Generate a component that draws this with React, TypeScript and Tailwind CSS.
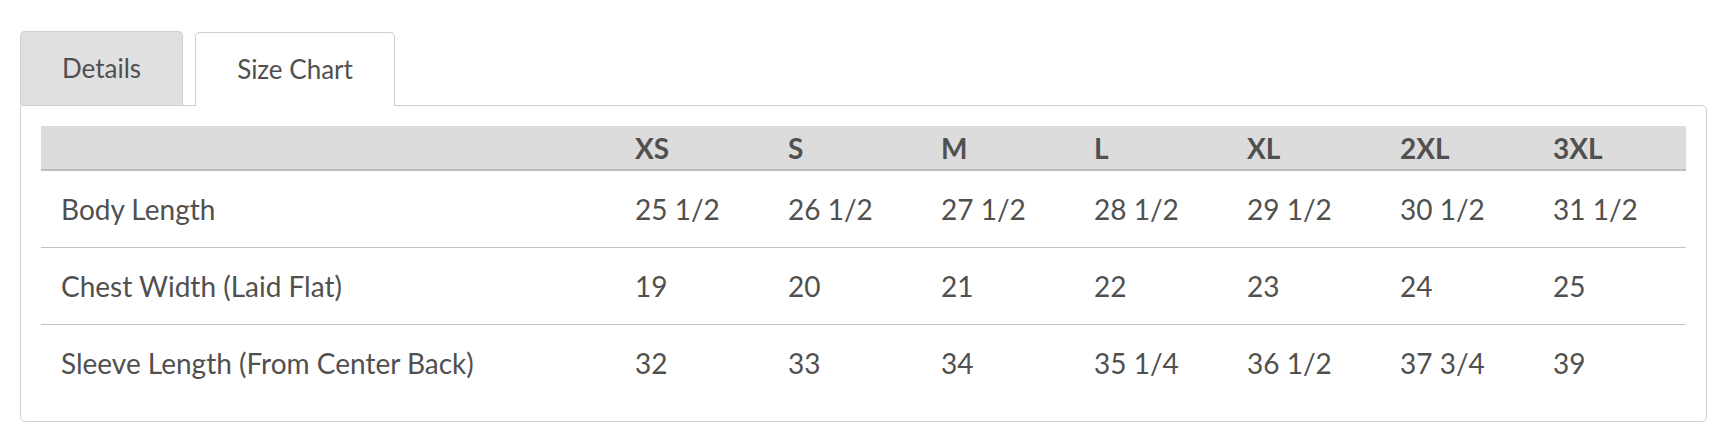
const sizes = ["XS", "S", "M", "L", "XL", "2XL", "3XL"];

const rows: { label: string; values: string[] }[] = [
  {
    label: "Body Length",
    values: ["25 1/2", "26 1/2", "27 1/2", "28 1/2", "29 1/2", "30 1/2", "31 1/2"],
  },
  {
    label: "Chest Width (Laid Flat)",
    values: ["19", "20", "21", "22", "23", "24", "25"],
  },
  {
    label: "Sleeve Length (From Center Back)",
    values: ["32", "33", "34", "35 1/4", "36 1/2", "37 3/4", "39"],
  },
];

const App = () => {
  return (
    <div className="font-['Lato',sans-serif] text-[#505050] bg-white w-[1726px] h-[444px] pt-[31px] pl-[20px]">
      <div className="flex items-end gap-[12px]">
        <div className="h-[74px] w-[163px] flex items-center justify-center bg-[#e0e0e0] border border-[#cfcfcf] border-b-0 rounded-t-[5px] text-[26px]">
          Details
        </div>
        <div className="relative z-10 -mb-px h-[74px] w-[200px] flex items-center justify-center bg-white border border-[#cfcfcf] border-b-0 rounded-t-[5px] text-[26px]">
          Size Chart
        </div>
      </div>
      <div className="w-[1687px] border border-[#cfcfcf] rounded-[5px] rounded-tl-[3px] p-[20px]">
        <div className="grid grid-cols-[574px_repeat(7,1fr)]">
          <div className="contents">
            <div className="h-[45px] bg-[#dcdcdc] border-b-2 border-[#bdbdbd]" />
            {sizes.map((s) => (
              <div
                key={s}
                className="h-[45px] bg-[#dcdcdc] border-b-2 border-[#bdbdbd] pl-[20px] flex items-center font-bold text-[28px]"
              >
                {s}
              </div>
            ))}
          </div>
          {rows.map((row, i) => {
            const line = i < rows.length - 1 ? "border-b border-[#c4c4c4] h-[77px]" : "h-[76px]";
            return (
              <div key={row.label} className="contents">
                <div className={`${line} pl-[20px] flex items-center text-[28px]`}>{row.label}</div>
                {row.values.map((v, j) => (
                  <div key={j} className={`${line} pl-[20px] flex items-center text-[28px]`}>
                    {v}
                  </div>
                ))}
              </div>
            );
          })}
        </div>
      </div>
    </div>
  );
};

export default App;
